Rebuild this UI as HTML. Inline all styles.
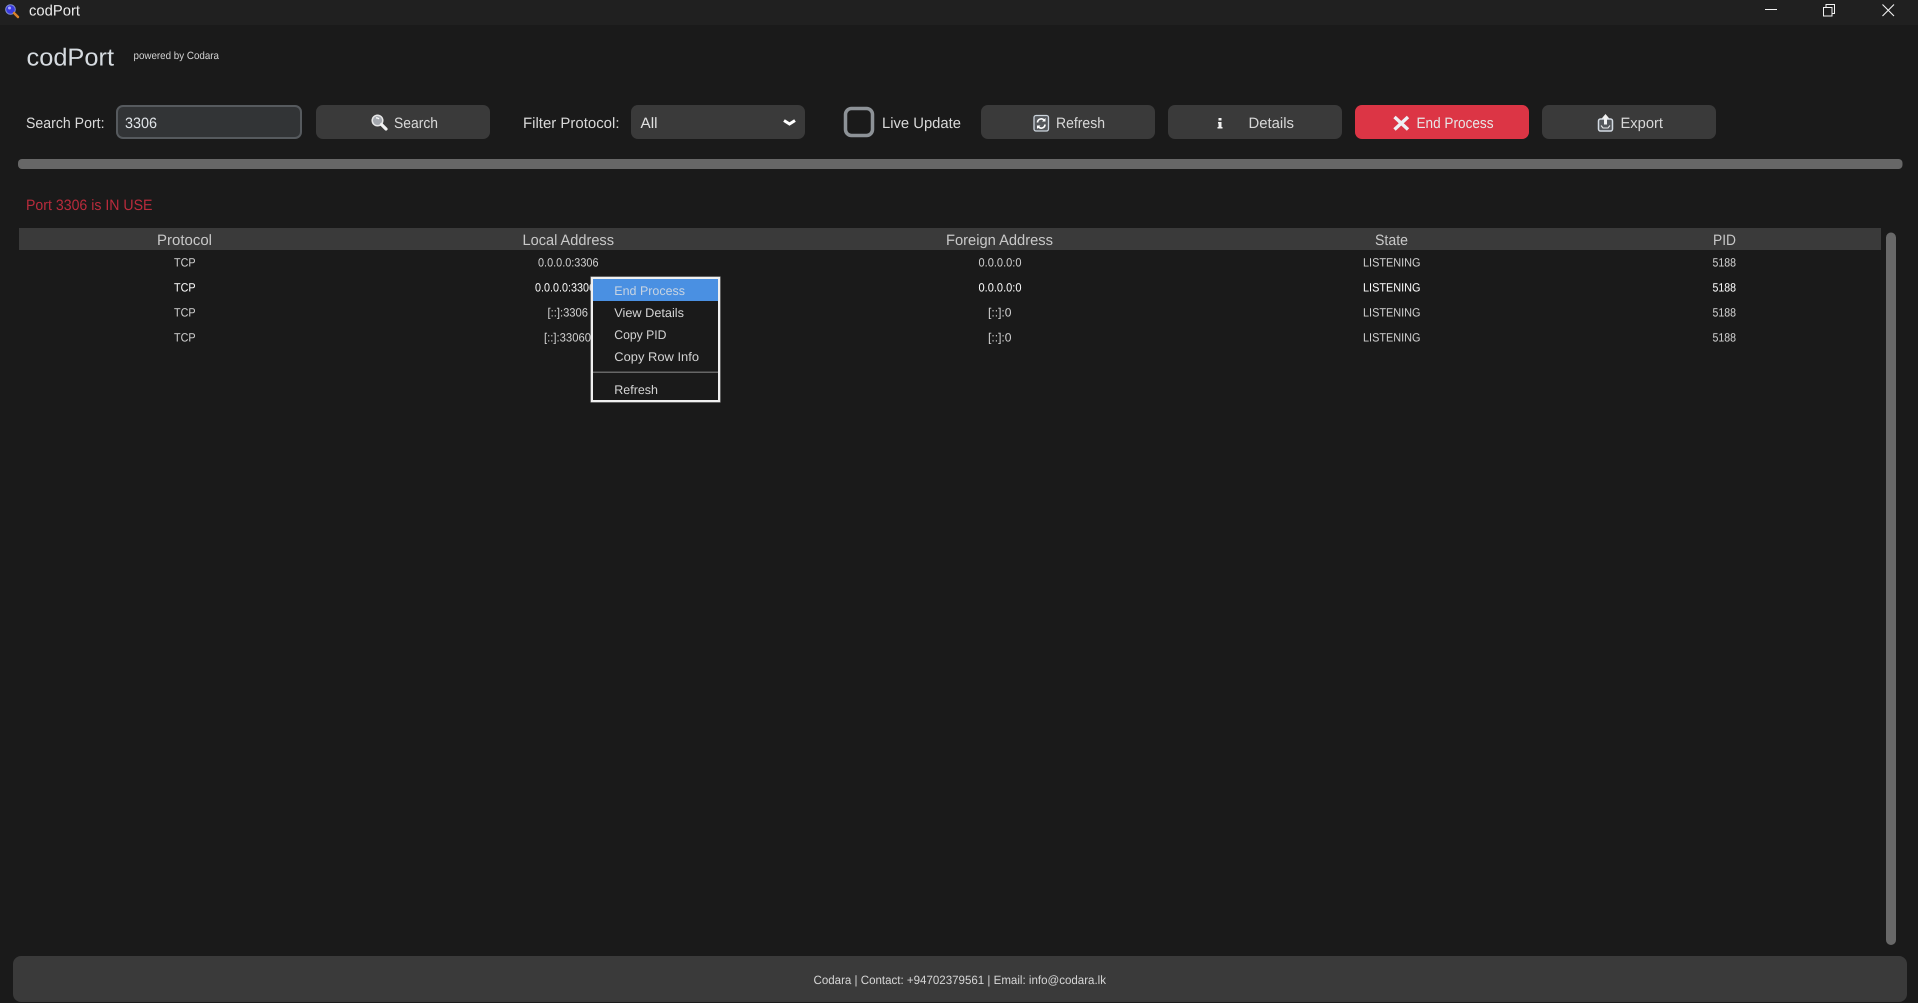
<!DOCTYPE html>
<html lang="en">
<head>
<meta charset="utf-8">
<title>codPort</title>
<style>
html,body{margin:0;padding:0;width:1918px;height:1003px;overflow:hidden;background:#1a1a1a}
svg{display:block;position:absolute;left:0;top:0}
text{font-family:"Liberation Sans",Arial,sans-serif;fill:#d8d8d8;text-rendering:geometricPrecision}
.l{font-size:15px}
.h{font-size:15px;fill:#c8c8c8}
.r{font-size:12px;fill:#d2d2d2}
.s{font-size:12px;fill:#ffffff}
.m{font-size:12.5px;fill:#d4d4d4}
</style>
</head>
<body>
<svg width="1918" height="1003" viewBox="0 0 1918 1003" xmlns="http://www.w3.org/2000/svg">
  <rect width="1918" height="1003" fill="#1a1a1a"/>
  <!-- title bar -->
  <rect width="1918" height="25" fill="#202020"/>
  <circle cx="10.500" cy="9.500" r="4.800" fill="#3a3ae0" stroke="#7f8fd0" stroke-width="1"/>
  <circle cx="9.500" cy="8" r="1.500" fill="#a8a8ff"/>
  <path d="M14 13l4 4" stroke="#d9822b" stroke-width="2.400" stroke-linecap="round"/>
  <text x="29" y="15.300" font-size="15" lengthAdjust="spacingAndGlyphs" textLength="51" style="fill:#ececec">codPort</text>
  <path d="M1765 9.500h12" stroke="#f2f2f2" stroke-width="1"/>
  <path d="M1823.500 7.500h8.500v8.500h-8.500z" fill="none" stroke="#f2f2f2" stroke-width="1"/>
  <path d="M1826 7v-2.500h8.500v9h-2" fill="none" stroke="#f2f2f2" stroke-width="1"/>
  <path d="M1882.500 4.500l11.500 11.500M1894 4.500l-11.500 11.500" stroke="#f2f2f2" stroke-width="1.100"/>

  <!-- heading -->
  <text x="26.500" y="65.500" font-size="24.500" lengthAdjust="spacingAndGlyphs" textLength="87.500" style="fill:#d6dbe0">codPort</text>
  <text x="133.500" y="58.800" font-size="10.500" lengthAdjust="spacingAndGlyphs" textLength="85.500" style="fill:#d4d4d4">powered by Codara</text>

  <!-- toolbar -->
  <text class="l" x="26" y="128" lengthAdjust="spacingAndGlyphs" textLength="78.500">Search Port:</text>
  <rect x="117" y="106" width="184" height="32" rx="6" fill="#323436" stroke="#565a5e" stroke-width="2"/>
  <text class="l" x="125" y="128" lengthAdjust="spacingAndGlyphs" textLength="32" style="fill:#e0e4e8">3306</text>

  <rect x="316" y="105" width="174" height="34" rx="7" fill="#3a3a3a"/>
  <circle cx="377.500" cy="120.500" r="5.300" fill="#a4a8ae" stroke="#e6e6e6" stroke-width="1.500"/>
  <path d="M376 118a3 3 0 0 1 3 1" stroke="#ffffff" stroke-width="1.200" fill="none"/>
  <path d="M381.500 124.500l4.500 4.500" stroke="#f2f2f2" stroke-width="3.200" stroke-linecap="round"/>
  <text class="l" x="394" y="128" lengthAdjust="spacingAndGlyphs" textLength="44">Search</text>

  <text class="l" x="523" y="128" lengthAdjust="spacingAndGlyphs" textLength="96.500">Filter Protocol:</text>
  <rect x="631" y="105" width="174" height="34" rx="7" fill="#3a3a3a"/>
  <text class="l" x="640.500" y="128" lengthAdjust="spacingAndGlyphs" textLength="17" style="fill:#e0e0e0">All</text>
  <path d="M784 120.500l5.500 3.500 5.500-3.500" fill="none" stroke="#ffffff" stroke-width="3"/>

  <rect x="845.500" y="108.500" width="27" height="27" rx="6" fill="#1a1a1a" stroke="#8d9297" stroke-width="3.500"/>
  <text class="l" x="882" y="128" lengthAdjust="spacingAndGlyphs" textLength="79">Live Update</text>

  <rect x="981" y="105" width="174" height="34" rx="7" fill="#3a3a3a"/>
  <rect x="1034" y="115.500" width="14.500" height="15.500" rx="2" fill="#55585c" stroke="#ccd4dc" stroke-width="1.300"/>
  <path d="M1037.500 122.500a3.800 3.800 0 0 1 6.500-2.500M1045 124.500a3.800 3.800 0 0 1-6.500 2.500" fill="none" stroke="#ffffff" stroke-width="1.700"/>
  <path d="M1045.500 118v3.500h-3.500zM1037 129v-3.500h3.500z" fill="#ffffff"/>
  <text class="l" x="1056" y="128" lengthAdjust="spacingAndGlyphs" textLength="49">Refresh</text>

  <rect x="1168" y="105" width="174" height="34" rx="7" fill="#3a3a3a"/>
  <path d="M1218.500 118h3v2.500h-3zM1218 122h3.500v5h1v1.500h-5v-1.500h1v-3.500h-.5z" fill="#f2f2f2"/>
  <text class="l" x="1248.500" y="128" lengthAdjust="spacingAndGlyphs" textLength="45.500">Details</text>

  <rect x="1355" y="105" width="174" height="34" rx="7" fill="#dc3545"/>
  <path d="M1394.500 117l13.500 12.500M1408 117l-13.500 12.500" stroke="#eef0f4" stroke-width="3.400"/>
  <text class="l" x="1416.500" y="128" lengthAdjust="spacingAndGlyphs" textLength="77" style="fill:#e6e6e6">End Process</text>

  <rect x="1542" y="105" width="174" height="34" rx="7" fill="#3a3a3a"/>
  <rect x="1598.500" y="119" width="14" height="12" rx="2" fill="#55585c" stroke="#d4dbe3" stroke-width="1.500"/>
  <path d="M1605.500 114l3.800 4.500h-2.300v6h-3v-6h-2.300z" fill="#f2f2f2"/>
  <path d="M1601 125.500l2 2.500h5l2-2.500" fill="none" stroke="#e6e6e6" stroke-width="1.100"/>
  <text class="l" x="1620.500" y="128" lengthAdjust="spacingAndGlyphs" textLength="42.500">Export</text>

  <!-- progress bar -->
  <rect x="18" y="159" width="1884.500" height="10" rx="4" fill="#676767"/>

  <!-- status -->
  <text x="26" y="209.800" font-size="15" lengthAdjust="spacingAndGlyphs" textLength="126.500" style="fill:#b92b3c">Port 3306 is IN USE</text>

  <!-- table header -->
  <rect x="19" y="228" width="1862" height="22" fill="#3a3a3a"/>
  <text class="h" x="157" y="244.800" lengthAdjust="spacingAndGlyphs" textLength="55">Protocol</text>
  <text class="h" x="522.500" y="244.800" lengthAdjust="spacingAndGlyphs" textLength="91.500">Local Address</text>
  <text class="h" x="946" y="244.800" lengthAdjust="spacingAndGlyphs" textLength="107">Foreign Address</text>
  <text class="h" x="1375" y="244.800" lengthAdjust="spacingAndGlyphs" textLength="33">State</text>
  <text class="h" x="1713" y="244.800" lengthAdjust="spacingAndGlyphs" textLength="23">PID</text>

  <!-- rows -->
  <text class="r" x="174" y="266.500" lengthAdjust="spacingAndGlyphs" textLength="21.500">TCP</text>
  <text class="r" x="538" y="266.500" lengthAdjust="spacingAndGlyphs" textLength="60.500">0.0.0.0:3306</text>
  <text class="r" x="978.500" y="266.500" lengthAdjust="spacingAndGlyphs" textLength="43">0.0.0.0:0</text>
  <text class="r" x="1363" y="266.500" lengthAdjust="spacingAndGlyphs" textLength="57.500">LISTENING</text>
  <text class="r" x="1712.500" y="266.500" lengthAdjust="spacingAndGlyphs" textLength="23.500">5188</text>

  <text class="s" x="174" y="291.500" lengthAdjust="spacingAndGlyphs" textLength="21.500">TCP</text>
  <text class="s" x="535" y="291.500" lengthAdjust="spacingAndGlyphs" textLength="66">0.0.0.0:33060</text>
  <text class="s" x="978.500" y="291.500" lengthAdjust="spacingAndGlyphs" textLength="43">0.0.0.0:0</text>
  <text class="s" x="1363" y="291.500" lengthAdjust="spacingAndGlyphs" textLength="57.500">LISTENING</text>
  <text class="s" x="1712.500" y="291.500" lengthAdjust="spacingAndGlyphs" textLength="23.500">5188</text>

  <text class="r" x="174" y="316.500" lengthAdjust="spacingAndGlyphs" textLength="21.500">TCP</text>
  <text class="r" x="547.500" y="316.500" lengthAdjust="spacingAndGlyphs" textLength="40.500">[::]:3306</text>
  <text class="r" x="988" y="316.500" lengthAdjust="spacingAndGlyphs" textLength="23.500">[::]:0</text>
  <text class="r" x="1363" y="316.500" lengthAdjust="spacingAndGlyphs" textLength="57.500">LISTENING</text>
  <text class="r" x="1712.500" y="316.500" lengthAdjust="spacingAndGlyphs" textLength="23.500">5188</text>

  <text class="r" x="544" y="341.500" lengthAdjust="spacingAndGlyphs" textLength="47">[::]:33060</text>
  <text class="r" x="174" y="341.500" lengthAdjust="spacingAndGlyphs" textLength="21.500">TCP</text>
  <text class="r" x="988" y="341.500" lengthAdjust="spacingAndGlyphs" textLength="23.500">[::]:0</text>
  <text class="r" x="1363" y="341.500" lengthAdjust="spacingAndGlyphs" textLength="57.500">LISTENING</text>
  <text class="r" x="1712.500" y="341.500" lengthAdjust="spacingAndGlyphs" textLength="23.500">5188</text>

  <!-- scrollbar -->
  <rect x="1886" y="232.500" width="10" height="712.500" rx="5" fill="#686868"/>

  <!-- context menu -->
  <rect x="590.500" y="276.500" width="130" height="126" fill="#a8a8a8"/>
  <rect x="591" y="277" width="129" height="125" fill="#f0f0f0"/>
  <rect x="593" y="279" width="125" height="121" fill="#1a1a1a"/>
  <rect x="593" y="279" width="125" height="22" fill="#4a90e2"/>
  <text class="m" x="614.300" y="295" lengthAdjust="spacingAndGlyphs" textLength="70.700" style="fill:#c8d4e2">End Process</text>
  <text class="m" x="614.300" y="317" lengthAdjust="spacingAndGlyphs" textLength="69.700">View Details</text>
  <text class="m" x="614.300" y="339" lengthAdjust="spacingAndGlyphs" textLength="52.200">Copy PID</text>
  <text class="m" x="614.300" y="361" lengthAdjust="spacingAndGlyphs" textLength="84.700">Copy Row Info</text>
  <rect x="593" y="371.500" width="125" height="1.500" fill="#666666"/>
  <text class="m" x="614.300" y="394" lengthAdjust="spacingAndGlyphs" textLength="43.700">Refresh</text>

  <!-- footer -->
  <rect x="13" y="956" width="1894" height="46" rx="8" fill="#3a3a3a"/>
  <text x="813.500" y="983.800" font-size="12" lengthAdjust="spacingAndGlyphs" textLength="292.500" style="fill:#d6d6d6">Codara | Contact: +94702379561 | Email: info@codara.lk</text>
</svg>
</body>
</html>
